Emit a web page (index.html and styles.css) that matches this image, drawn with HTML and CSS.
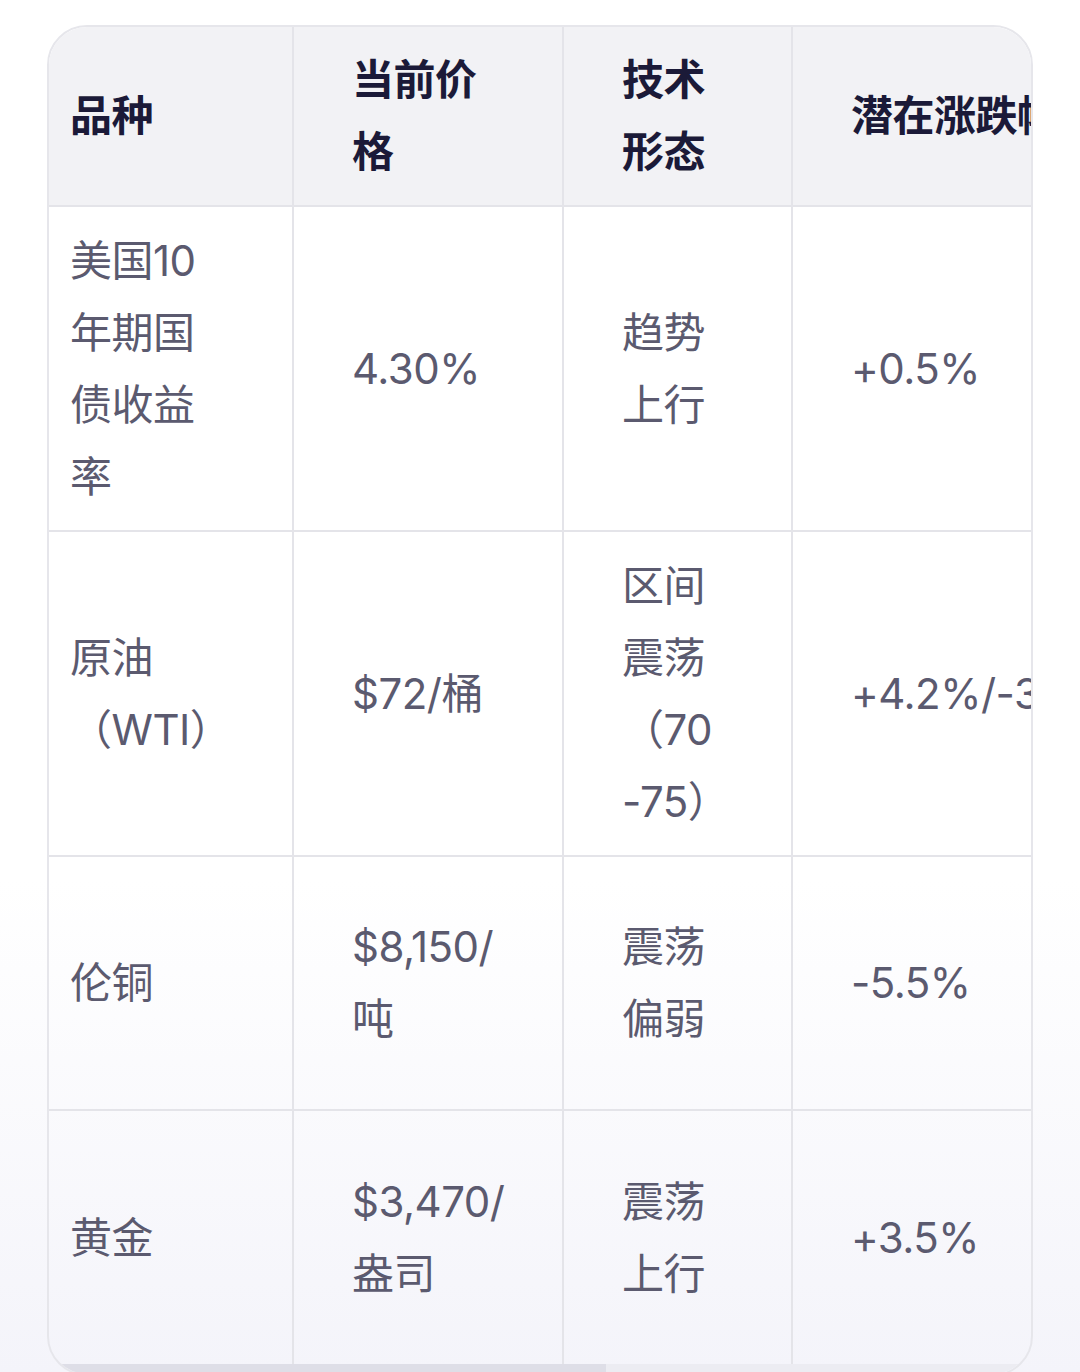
FILE: index.html
```html
<!DOCTYPE html>
<html lang="zh-CN">
<head>
<meta charset="utf-8">
<title>市场品种技术形态</title>
<link rel="stylesheet" href="styles.css">
</head>
<body>
<div class="table-card">
  <div class="scroller">
    <table class="data-table">
      <colgroup>
        <col class="c1"><col class="c2"><col class="c3"><col class="c4">
      </colgroup>
      <thead>
        <tr class="row-head">
          <th>品种</th>
          <th>当前价格</th>
          <th>技术形态</th>
          <th class="wide">潜在涨跌幅</th>
        </tr>
      </thead>
      <tbody>
        <tr class="row-1">
          <td>美国10年期国债收益率</td>
          <td>4.30%</td>
          <td>趋势上行</td>
          <td class="wide">+0.5%</td>
        </tr>
        <tr class="row-2">
          <td>原油（WTI）</td>
          <td>$72/桶</td>
          <td>区间震荡（70<br>-75）</td>
          <td class="wide">+4.2%/-3.0%</td>
        </tr>
        <tr class="row-3">
          <td>伦铜</td>
          <td>$8,150/吨</td>
          <td>震荡偏弱</td>
          <td class="wide">-5.5%</td>
        </tr>
        <tr class="row-4">
          <td>黄金</td>
          <td>$3,470/盎司</td>
          <td>震荡上行</td>
          <td class="wide">+3.5%</td>
        </tr>
      </tbody>
    </table>
  </div>
  <div class="scrollbar"><div class="thumb"></div></div>
</div>
</body>
</html>
```

FILE: styles.css
```css
html {
  background: linear-gradient(to bottom, #ffffff 0px, #ffffff 880px, #f4f4fa 1372px);
  min-height: 100%;
}
body {
  margin: 0;
  padding: 25px 0 0 47px;
  font-family: "Inter", "Noto Sans CJK SC", sans-serif;
  color: #5b5a6f;
}
.table-card {
  width: 986px;
  box-sizing: border-box;
  border: 2px solid #e6e6eb;
  border-radius: 40px;
  overflow: hidden;
}
.scroller {
  overflow: hidden;
}
.data-table {
  border-collapse: separate;
  border-spacing: 0;
  table-layout: fixed;
  width: 1744px;
  font-size: 42px;
  line-height: 72px;
  letter-spacing: -0.5px;
}
.c1 { width: 245px; }
.c2 { width: 270px; }
.c3 { width: 229px; }
.c4 { width: 1000px; }
.data-table th,
.data-table td {
  box-sizing: border-box;
  border-right: 2px solid #e4e4e9;
  border-bottom: 2px solid #e4e4e9;
  padding: 0 54px 0 58px;
  text-align: left;
  vertical-align: middle;
  word-break: normal;
}
.data-table th:first-child,
.data-table td:first-child {
  padding: 0 76px 0 21px;
}
.data-table th:nth-child(3),
.data-table td:nth-child(3) {
  padding: 0 58px 0 58px;
}
.data-table .wide {
  white-space: nowrap;
}
.data-table th {
  background: #f2f2f5;
  color: #1b1a38;
  font-weight: 700;
}
.row-head th { height: 180px; }
.row-1 td { height: 325px; }
.row-2 td { height: 325px; }
.row-3 td { height: 254px; }
.row-4 td { height: 253px; }
.row-4 td { border-bottom: none; }
.scrollbar {
  height: 10px;
  background: #ececf2;
}
.thumb {
  width: 557px;
  height: 100%;
  background: #dedee7;
}
```
